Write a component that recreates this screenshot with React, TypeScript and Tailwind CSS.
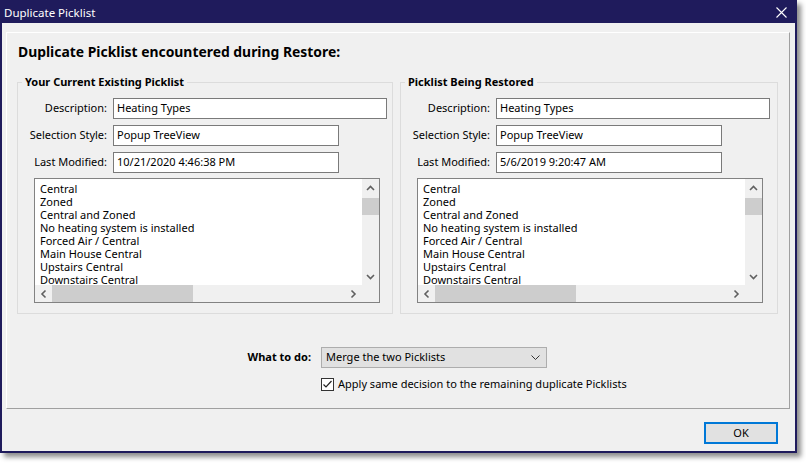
import React from 'react';

const listItems = [
  'Central',
  'Zoned',
  'Central and Zoned',
  'No heating system is installed',
  'Forced Air / Central',
  'Main House Central',
  'Upstairs Central',
  'Downstairs Central',
];

// small scrollbar arrow, drawn pointing up and rotated for other directions
const Arrow = ({ className = '' }: { className?: string }) => (
  <svg width="9" height="6" viewBox="0 0 9 6" className={className}>
    <polyline points="1,5 4.5,1.5 8,5" fill="none" stroke="#606060" strokeWidth="1.6" />
  </svg>
);

const ListBox: React.FC = () => (
  <div className="ml-[16px] mt-[5px] h-[125px] w-[346px] border border-[#828282] bg-white flex flex-col">
    <div className="flex flex-1 min-h-0">
      <div className="flex-1 overflow-hidden pl-[5px] pt-[3px] leading-[13px] text-black">
        {listItems.map((it) => (
          <div key={it} className="h-[13px] whitespace-nowrap">
            {it}
          </div>
        ))}
      </div>
      <div className="w-[17px] bg-[#f0f0f0] flex flex-col">
        <div className="h-[17px] flex items-center justify-center">
          <Arrow />
        </div>
        <div className="mt-[2px] h-[17px] bg-[#cdcdcd]" />
        <div className="flex-1" />
        <div className="h-[17px] flex items-center justify-center">
          <Arrow className="rotate-180" />
        </div>
      </div>
    </div>
    <div className="h-[17px] flex bg-[#f0f0f0]">
      <div className="w-[17px] flex items-center justify-center">
        <Arrow className="-rotate-90" />
      </div>
      <div className="w-[141px] bg-[#cdcdcd]" />
      <div className="flex-1" />
      <div className="w-[17px] flex items-center justify-center">
        <Arrow className="rotate-90" />
      </div>
      <div className="w-[17px]" />
    </div>
  </div>
);

const Field = ({ label, value, width }: { label: string; value: string; width: string }) => (
  <div className="flex items-center h-[21px]">
    <span className="w-[89px] text-right whitespace-nowrap">{label}</span>
    <div className={`ml-[6px] h-[21px] ${width} border border-[#7a7a7a] bg-white px-[3px] flex items-center whitespace-nowrap`}>
      {value}
    </div>
  </div>
);

const PicklistGroup = ({
  title,
  modified,
  className,
}: {
  title: string;
  modified: string;
  className: string;
}) => (
  <fieldset className={`border border-[#dcdcdc] h-[240px] ${className}`}>
    <legend className="ml-[4px] px-[3px] font-bold leading-[16px] text-black">{title}</legend>
    <div className="flex flex-col gap-[6px] pt-[8px]">
      <Field label="Description:" value="Heating Types" width="w-[274px]" />
      <Field label="Selection Style:" value="Popup TreeView" width="w-[226px]" />
      <Field label="Last Modified:" value={modified} width="w-[226px]" />
    </div>
    <ListBox />
  </fieldset>
);

export default function App() {
  return (
    <div className="w-[806px] h-[464px] bg-white font-['Noto_Sans',sans-serif] text-[11px] text-black">
      <div className="w-[797px] h-[453px] border-2 border-[#1f1b5c] bg-[#f0f0f0] flex flex-col shadow-[4px_4px_5px_rgba(0,0,0,0.45)]">
        {/* title bar */}
        <div className="h-[21px] bg-[#1f1b5c] flex items-center justify-between pl-[2px] pr-[8px]">
          <span className="text-white text-[11.5px]">Duplicate Picklist</span>
          <svg width="11" height="11" viewBox="0 0 11 11">
            <path d="M0.5 0.5 L10.5 10.5 M10.5 0.5 L0.5 10.5" stroke="#ffffff" strokeWidth="1.1" />
          </svg>
        </div>

        <div className="flex-1 flex flex-col pl-[4px] pr-[5px] pt-[9px]">
          {/* main panel */}
          <div className="h-[377px] border-t border-l border-t-white border-l-white border-b border-r border-b-[#a0a0a0] border-r-[#a0a0a0] pl-[10px] pr-[11px] flex flex-col">
            <h1 className="mt-[9px] ml-[1px] h-[20px] leading-[20px] text-[13.9px] font-bold">
              Duplicate Picklist encountered during Restore:
            </h1>
            <div className="mt-[12px] flex gap-[7px]">
              <PicklistGroup
                title="Your Current Existing Picklist"
                modified="10/21/2020 4:46:38 PM"
                className="w-[376px]"
              />
              <PicklistGroup
                title="Picklist Being Restored"
                modified="5/6/2019 9:20:47 AM"
                className="w-[378px]"
              />
            </div>

            <div className="mt-[33px] flex items-center h-[21px] pl-[190px]">
              <span className="w-[104px] text-right font-bold">What to do:</span>
              <div className="ml-[10px] w-[226px] h-[21px] border border-[#adadad] bg-[#e1e1e1] flex items-center justify-between pl-[4px] pr-[6px]">
                <span>Merge the two Picklists</span>
                <svg width="9" height="5" viewBox="0 0 9 5">
                  <polyline points="0.5,0.5 4.5,4.5 8.5,0.5" fill="none" stroke="#333333" strokeWidth="1" />
                </svg>
              </div>
            </div>
            <div className="mt-[9px] flex items-center pl-[304px] h-[14px]">
              <div className="w-[13px] h-[13px] border border-[#333333] bg-white flex items-center justify-center">
                <svg width="11" height="11" viewBox="0 0 11 11">
                  <polyline points="1.5,5.5 4,8 9.5,2" fill="none" stroke="#222222" strokeWidth="1.2" />
                </svg>
              </div>
              <span className="ml-[4px] whitespace-nowrap">Apply same decision to the remaining duplicate Picklists</span>
            </div>
          </div>

          <div className="flex justify-end pr-[12px] pt-[13px]">
            <button
              type="button"
              className="w-[74px] h-[22px] border-2 border-[#0078d7] bg-[#e1e1e1] flex items-center justify-center"
            >
              OK
            </button>
          </div>
        </div>
      </div>
    </div>
  );
}
